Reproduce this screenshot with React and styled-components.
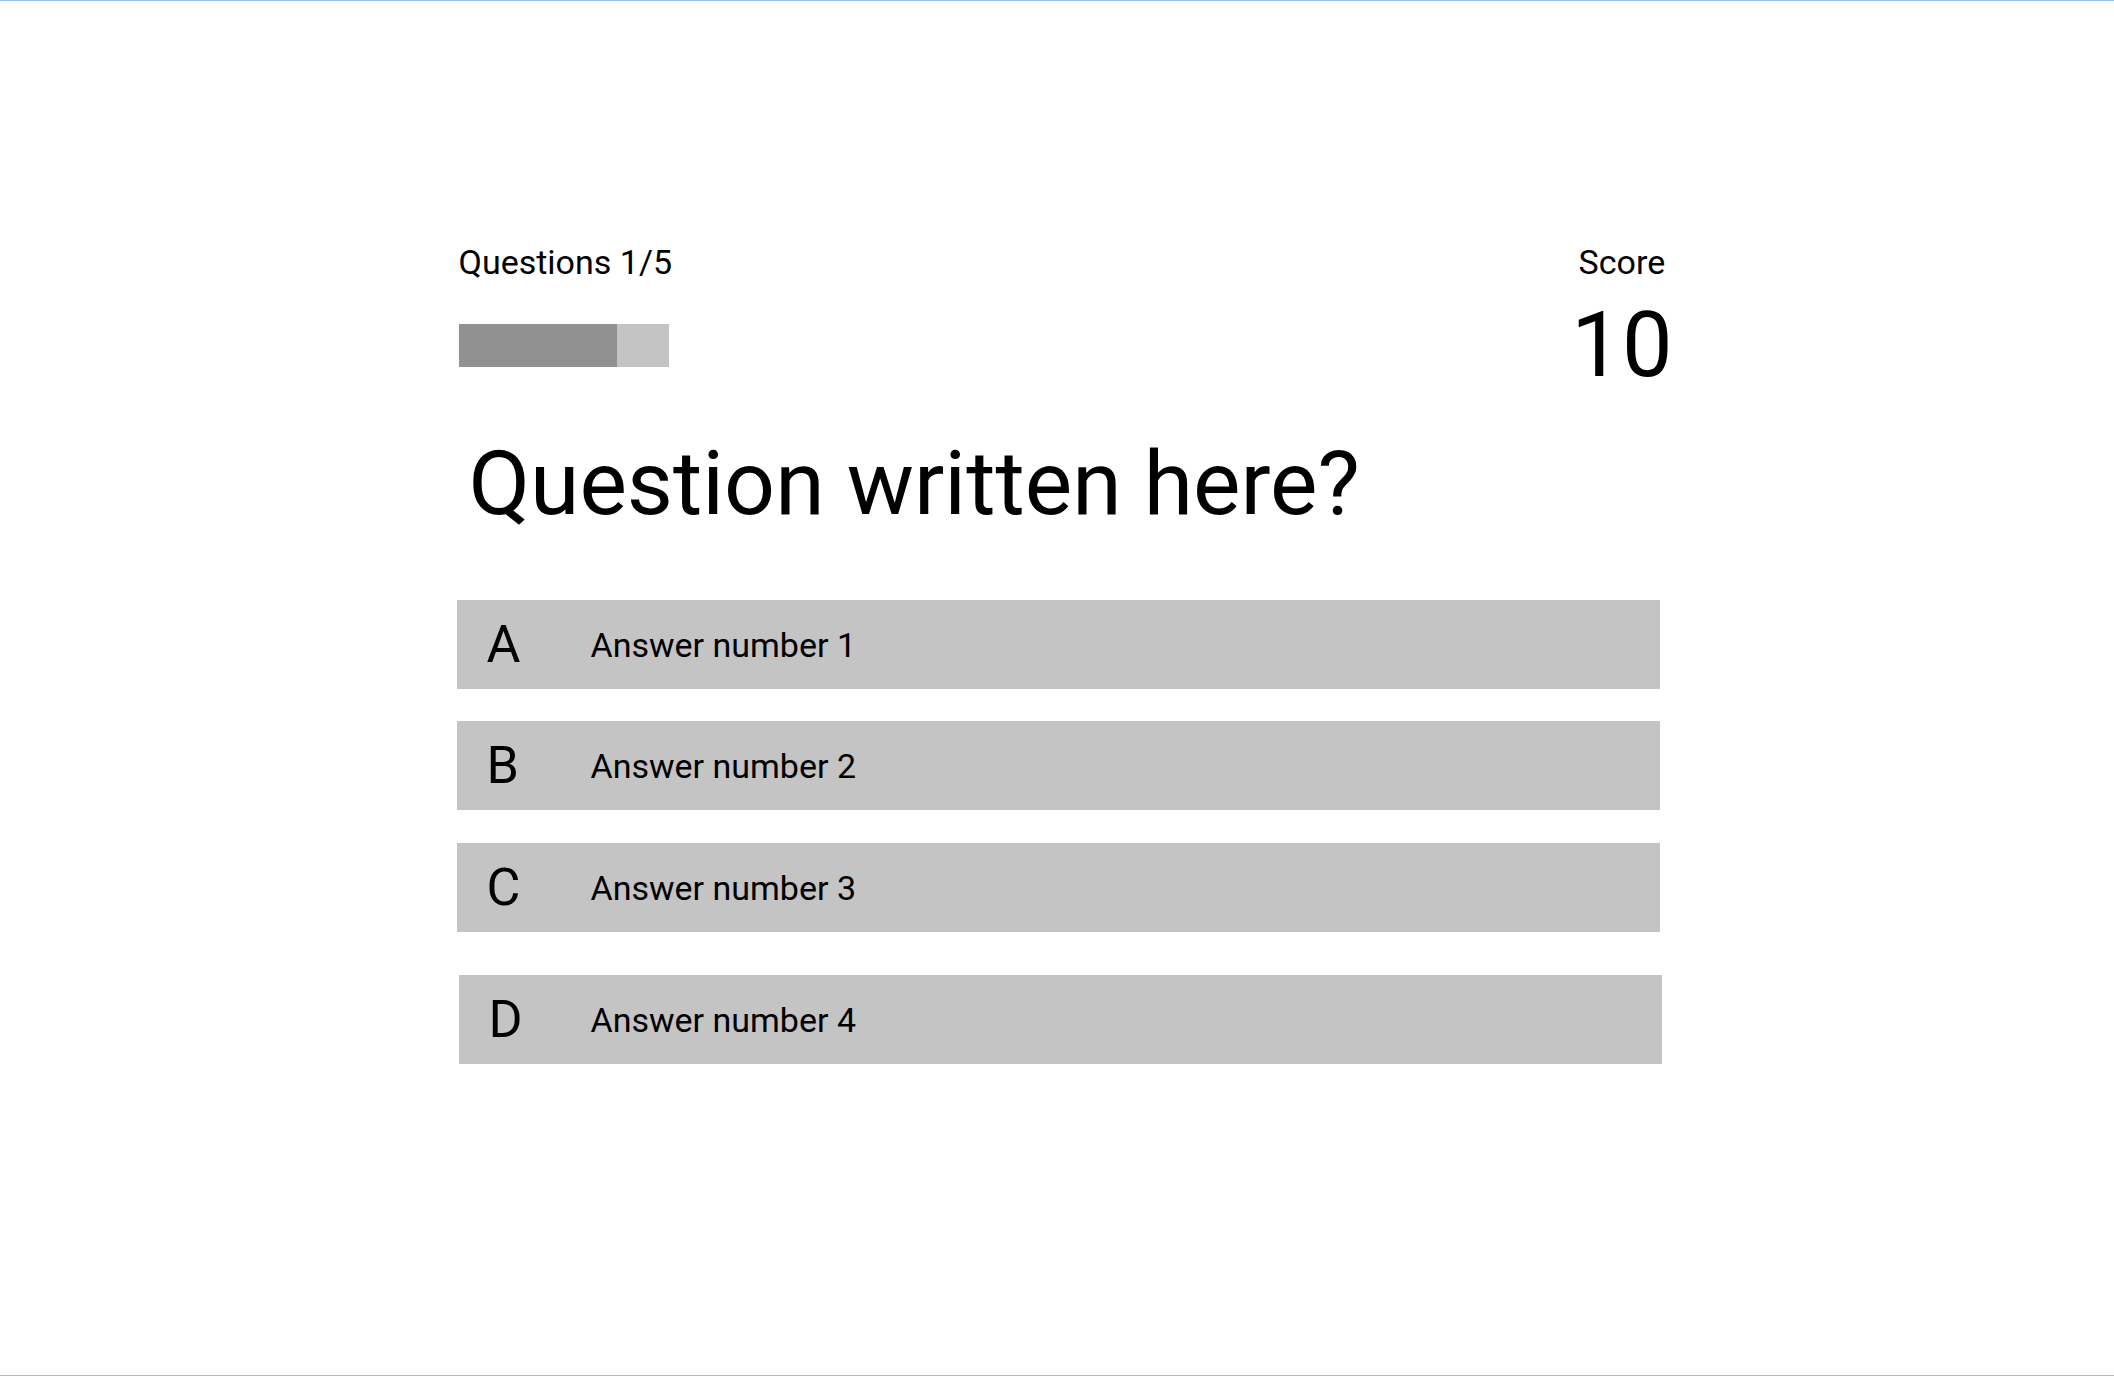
import styled, { createGlobalStyle } from "styled-components";

const GlobalStyle = createGlobalStyle`
  body {
    margin: 0;
    font-family: Roboto, "Liberation Sans", Arial, sans-serif;
    color: #000;
    background: #fff;
  }
`;

const Frame = styled.main`
  box-sizing: border-box;
  height: 1376px;
  padding-top: 241px;
  padding-left: 2px;
  border-top: 1px solid #94bdf4;
  border-bottom: 1px solid #94bdf4;
`;

const Quiz = styled.section`
  width: 1203px;
  margin: 0 auto;
`;

const Header = styled.header`
  display: flex;
  justify-content: space-between;
  align-items: flex-start;
  padding-left: 2px;
`;

const Progress = styled.div`
  display: flex;
  flex-direction: column;
`;

const ScoreBox = styled.div`
  display: flex;
  flex-direction: column;
  align-items: center;
  margin-right: -13px;
`;

const Label = styled.span`
  font-size: 34px;
  line-height: 40px;
`;

const Bar = styled.div`
  width: 210px;
  height: 43px;
  margin-top: 42px;
  background: #c4c4c4;
`;

const BarFill = styled.div`
  height: 100%;
  background: #919191;
`;

const ScoreValue = styled.span`
  font-size: 90px;
  line-height: 106px;
  margin-top: 11px;
`;

const Question = styled.h1`
  margin: 32px 0 0;
  padding-left: 12px;
  font-size: 89.5px;
  font-weight: 400;
  line-height: 106px;
`;

const Answers = styled.ol`
  list-style: none;
  margin: 63px 0 0;
  padding: 0;
  display: flex;
  flex-direction: column;
  gap: 32px;
`;

const Answer = styled.li`
  display: flex;
  align-items: center;
  height: 89px;
  padding-left: 30px;
  background: #c4c4c4;
  margin-top: ${(p) => p.$extra || 0}px;
  margin-left: ${(p) => p.$shift || 0}px;
  margin-right: ${(p) => -(p.$shift || 0)}px;
`;

const Letter = styled.span`
  width: 104px;
  font-size: 52px;
  line-height: 60px;
`;

const AnswerText = styled.span`
  font-size: 34px;
  line-height: 40px;
  margin-left: ${(p) => -(p.$shift || 0)}px;
`;

const answers = [
  { letter: "A", text: "Answer number 1" },
  { letter: "B", text: "Answer number 2" },
  { letter: "C", text: "Answer number 3", extra: 1 },
  { letter: "D", text: "Answer number 4", extra: 11, shift: 2 },
];

export default function App() {
  const current = 1;
  const total = 5;
  return (
    <>
      <GlobalStyle />
      <Frame>
        <Quiz>
          <Header>
            <Progress>
              <Label>
                Questions {current}/{total}
              </Label>
              <Bar>
                <BarFill style={{ width: "75.5%" }} />
              </Bar>
            </Progress>
            <ScoreBox>
              <Label>Score</Label>
              <ScoreValue>10</ScoreValue>
            </ScoreBox>
          </Header>
          <Question>Question written here?</Question>
          <Answers>
            {answers.map((a) => (
              <Answer key={a.letter} $extra={a.extra} $shift={a.shift}>
                <Letter>{a.letter}</Letter>
                <AnswerText $shift={a.shift}>{a.text}</AnswerText>
              </Answer>
            ))}
          </Answers>
        </Quiz>
      </Frame>
    </>
  );
}
